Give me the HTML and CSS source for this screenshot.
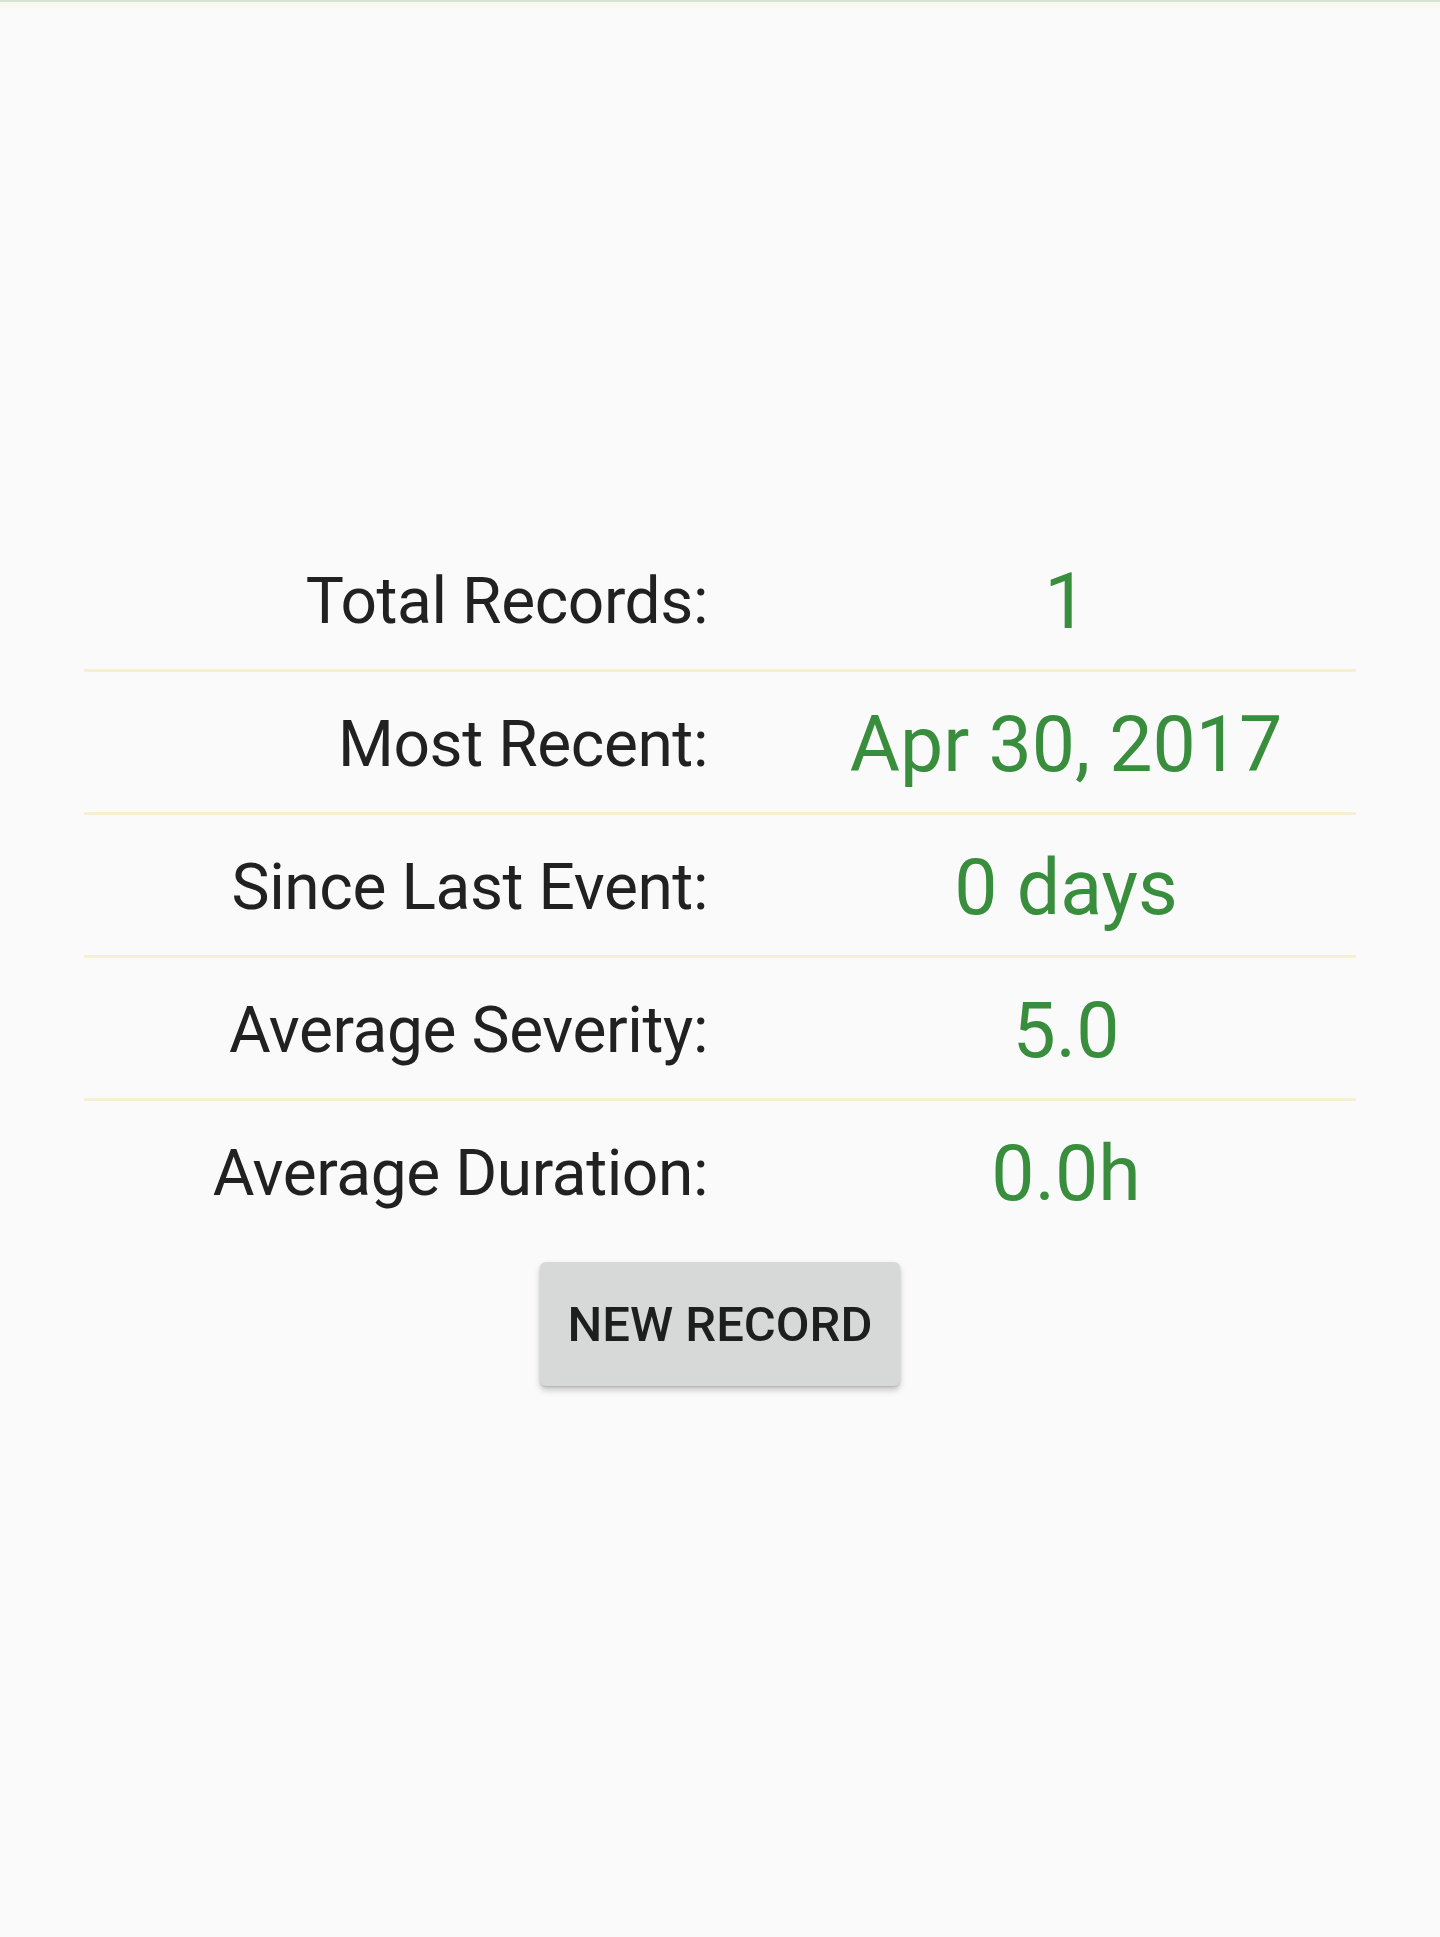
FILE: index.html
```html
<!DOCTYPE html>
<html lang="en">
<head>
<meta charset="utf-8">
<title>Records</title>
<link rel="stylesheet" href="styles.css">
</head>
<body>
<div class="topline"></div>
<main class="screen">
  <section class="stats">
    <div class="row">
      <div class="label">Total Records:</div>
      <div class="value">1</div>
    </div>
    <div class="row">
      <div class="label">Most Recent:</div>
      <div class="value">Apr 30, 2017</div>
    </div>
    <div class="row">
      <div class="label">Since Last Event:</div>
      <div class="value">0 days</div>
    </div>
    <div class="row">
      <div class="label">Average Severity:</div>
      <div class="value">5.0</div>
    </div>
    <div class="row">
      <div class="label">Average Duration:</div>
      <div class="value">0.0h</div>
    </div>
  </section>
  <div class="actions">
    <button class="btn">NEW RECORD</button>
  </div>
</main>
</body>
</html>
```
FILE: styles.css
```css
html, body {
  margin: 0;
  padding: 0;
}
body {
  background: #fafafa;
  font-family: Roboto, "Noto Sans", "Liberation Sans", sans-serif;
  height: 1937px;
  overflow: hidden;
}
.topline {
  height: 2px;
  background: #d6e3d4;
  border-bottom: 6px solid #f6faf0;
}
.screen {
  padding: 521px 84px 0;
}
.stats {
  display: flex;
  flex-direction: column;
}
.row {
  display: grid;
  grid-template-columns: 624px 1fr;
  align-items: center;
  box-sizing: border-box;
  height: 143px;
  padding-top: 6px;
  border-bottom: 3px solid #f8efd2;
}
.row:last-child {
  border-bottom: none;
  height: 140px;
}
.label {
  text-align: right;
  font-size: 64px;
  letter-spacing: -0.4px;
  line-height: 1;
  color: #212121;
}
.value {
  text-align: center;
  padding-left: 68px;
  font-size: 77px;
  line-height: 1;
  color: #388e3c;
}
.actions {
  display: flex;
  justify-content: center;
  padding-top: 21px;
}
.btn {
  width: 360px;
  height: 124px;
  border: none;
  border-radius: 6px;
  background: #d7d8d8;
  color: #1e1e1e;
  font-family: Roboto, "Noto Sans", "Liberation Sans", sans-serif;
  font-size: 49px;
  font-weight: 500;
  box-shadow: 0 4px 6px rgba(0, 0, 0, 0.22), 0 1px 2px rgba(0, 0, 0, 0.12);
  padding: 0;
}
```
